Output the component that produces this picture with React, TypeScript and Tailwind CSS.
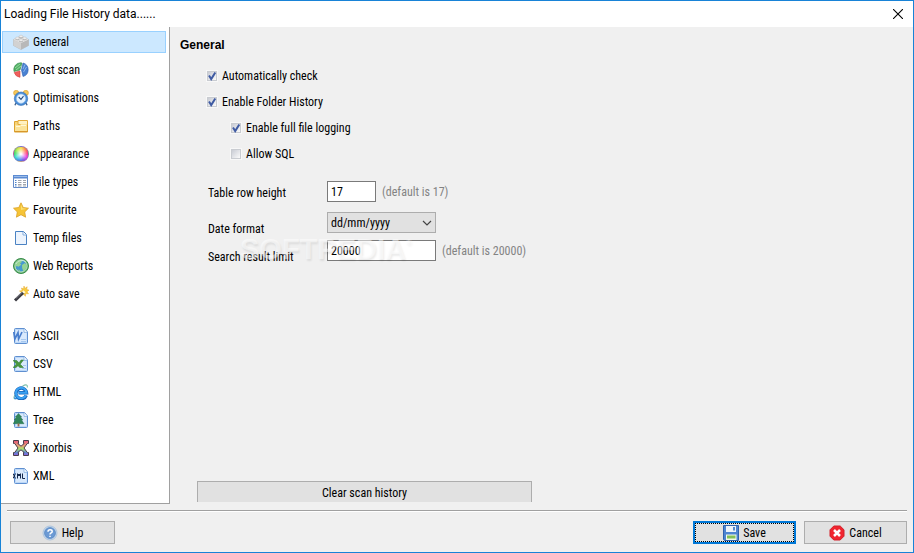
import { useState } from 'react'
import type { ReactNode } from 'react'

const Svg = ({ children }: { children: ReactNode }) => (
  <svg viewBox="0 0 16 16" className="w-4 h-4 shrink-0" aria-hidden="true">{children}</svg>
)

const BrickIcon = () => (
  <Svg>
    <path d="M0.5 5.5 8 2l7.5 3.5v6L8 15.5.5 11.5z" fill="#c8c8c8" stroke="#b4b4b4" strokeWidth=".6" />
    <path d="M.5 5.5 8 9v6.5L.5 11.5z" fill="#d2d2d2" />
    <path d="M15.5 5.5 8 9v6.5l7.5-4z" fill="#b8b8b8" />
    <path d="M.5 5.5 8 2l7.5 3.5L8 9z" fill="#e4e4e4" />
    {[[8, 2.4], [4.3, 4.2], [11.7, 4.2], [8, 6.2]].map(([x, y]) => (
      <g key={x + '-' + y}>
        <ellipse cx={x} cy={y + 0.8} rx="1.9" ry="1.3" fill="#a8a8a8" />
        <ellipse cx={x} cy={y} rx="1.9" ry="1.2" fill="#f1f1f1" stroke="#b4b4b4" strokeWidth=".4" />
      </g>
    ))}
  </Svg>
)

const PieIcon = () => (
  <Svg>
    <path d="M7 8 1 9.5A7 7 0 0 1 7.5.7L9 1z" fill="#54b267" stroke="#32884a" strokeWidth=".6" />
    <path d="M2 6 7 2M3 8l5-4" stroke="#a5dfaa" strokeWidth=".8" />
    <path d="M8.5 8 10 1a7 7 0 0 1 0 13.5z" fill="#4a82d2" stroke="#2a5db0" strokeWidth=".6" />
    <path d="m10 7 2-4.5M10.5 10l3-5" stroke="#9cc3f3" strokeWidth=".8" />
    <path d="M7 9v6.3A7 7 0 0 1 1.2 10.5z" fill="#f0605c" stroke="#d23f3f" strokeWidth=".6" />
  </Svg>
)

const ClockIcon = () => (
  <Svg>
    <path d="m3 13-1 2.3M13 13l1 2.3" stroke="#496a93" strokeWidth="1.5" />
    <circle cx="3.2" cy="2.9" r="2.6" fill="#f4c75b" stroke="#d89d2b" strokeWidth=".6" />
    <circle cx="12.8" cy="2.9" r="2.6" fill="#f4c75b" stroke="#d89d2b" strokeWidth=".6" />
    <circle cx="8" cy="8.7" r="6.7" fill="#4a8ed8" stroke="#2d69b2" strokeWidth=".6" />
    <circle cx="8" cy="8.7" r="4.7" fill="#e8f4ff" stroke="#8dbbe9" strokeWidth=".6" />
    <path d="m5.7 7 2.3 2.3 2.5-3.2" fill="none" stroke="#274c7d" strokeWidth="1.1" />
  </Svg>
)

const FolderIcon = () => (
  <Svg>
    <path d="M1.5 3.5H6L7 5h7.5v9h-13z" fill="#f8d477" stroke="#dca32f" />
    <path d="M5 2.5h9.5v4H5z" fill="#fff1c1" stroke="#e2ab3c" />
    <path d="M2 7h5l1-1h6v7.5H2z" fill="#fbe398" />
    <path d="M3 8.5h4l1-1h5" fill="none" stroke="#fff7d9" />
    <path d="M2 13.5h12.5" stroke="#d8962a" />
  </Svg>
)

const WheelIcon = () => (
  <span className="w-4 h-4 shrink-0 rounded-full border border-[#8d6ab0]/60 bg-[radial-gradient(circle,#fff_5%,transparent_65%),conic-gradient(#f6e04b,#ff8a3c,#ff3f78,#e544e8,#7457e8,#389aee,#38dfd0,#45dd5c,#b5ed43,#f6e04b)]" />
)

const TableIcon = () => (
  <Svg>
    <path d="M.5 1.5h14v12H.5z" fill="#fff" stroke="#648bc8" />
    <path d="M0 1h15v3.5H0z" fill="#5c8bd2" />
    <path d="M1 2.5h13" stroke="#9bbce9" />
    <path d="M2 6.5h1.5M2 8.5h1.5M2 10.5h1.5M2 12h1.5" stroke="#4f84c9" />
    <path d="M5 6.5h3.5M5 8.5h3.5M5 10.5h3.5M5 12h3.5M10 6.5h3M10 8.5h3M10 10.5h3M10 12h3" stroke="#969ba3" strokeWidth=".9" />
  </Svg>
)

const StarIcon = () => (
  <Svg>
    <path d="m8 .8 2.2 4.7 5.3.7-3.8 3.7.9 5.3L8 12.7l-4.6 2.5.9-5.3L.5 6.2l5.3-.7z" fill="#f6c436" stroke="#dba127" strokeWidth=".8" strokeLinejoin="round" />
    <path d="m8 2.5 1.5 3.8 3.8.5L8 8z" fill="#fbdf74" />
  </Svg>
)

const PageIcon = () => (
  <Svg>
    <path d="M2.5 1.5h8l3 3v10h-11z" fill="#edf4fd" stroke="#4a82c3" strokeLinejoin="round" />
    <path d="M10 2v3h3.5" fill="#fff" stroke="#84aede" />
  </Svg>
)

const GlobeIcon = () => (
  <Svg>
    <circle cx="8" cy="8" r="7.5" fill="#68ae70" stroke="#388e4a" />
    <circle cx="8" cy="8" r="6" fill="#4799cf" stroke="#b9e3bf" />
    <path d="M2.3 6C3 3.4 5 2 7.7 2L9 4 7 5.2l1.2 1.5-2.7 2L3.8 8 2.3 9zM9 7l3-2 2 2.5-1 3-2.5 3-1.3-3.2z" fill="#96d492" />
    <path d="M4.5 11.5 7 12l-.5 2z" fill="#81c987" />
    <path d="M3 6a6 5 0 0 1 10-2" fill="none" stroke="#e3f7f4" strokeOpacity=".6" />
  </Svg>
)

const WandIcon = () => (
  <Svg>
    <path d="m11 0 .8 2.4L14.2.8l-.6 2.7 2.4.6-2 1.6 1.5 2.1-2.7-.2-.4 2.7-1.7-2-2.3 1.1.6-2.6L6.5 5l2.7-.5L8.5 2l2 .9z" fill="#f8cc3c" stroke="#e6a729" strokeWidth=".5" />
    <path d="m2 14.5 8.5-8.3" stroke="#3b3b42" strokeWidth="3" />
    <path d="m3 12.3 6-5.8" stroke="#9b9ba3" strokeWidth=".8" />
    <path d="m10 6.7 1.5-1.5" stroke="#fff6d5" strokeWidth="3" />
  </Svg>
)

const DocBase = () => (
  <>
    <path d="M2.5.5h9l3 3.5v10.5q0 1-1 1h-11q-1 0-1-1v-13q0-1 1-1z" fill="#bcd8f8" stroke="#5f8fd0" />
    <path d="M3 2h8v3h2.5v9H3z" fill="#d9e9fc" />
    <path d="M11 .8v3.5h3.3" fill="#fff" stroke="#83ade0" strokeWidth=".8" />
  </>
)

const WordIcon = () => (
  <Svg>
    <DocBase />
    <path d="m.8 4 1 7L5 4.8l.6 6.2L9 4" fill="none" stroke="#4a7fce" strokeWidth="1.7" />
    <path d="M8 11.5h5M8 13.5h5" stroke="#a7c8ef" />
  </Svg>
)

const ExcelIcon = () => (
  <Svg>
    <DocBase />
    <path d="M0 4.5h3.7L6 7l2-3h2.5L7.2 8.2l3.3 3.3H6.7L5 9.7l-2 1.8H0L3.5 8z" fill="#49973d" stroke="#2a752c" strokeWidth=".5" />
    <path d="M9 12.5h4M10 9.5h3" stroke="#a7c8ef" />
  </Svg>
)

const BrowserIcon = () => (
  <Svg>
    <path d="M3.2 9.5c-3 3.5-3.3 6.4.8 4.7M9.5 2.2c3.5-2.2 5.6-1.6 4.6 1.3" fill="none" stroke="#7fbfa9" strokeWidth="1.1" />
    <path d="M13.2 11.3A5.3 5.3 0 1 1 13.5 8.7H5.5" fill="none" stroke="#1a66bd" strokeWidth="3.4" />
    <path d="M13 11.3A5.3 5.3 0 1 1 13.5 8.7H5.5" fill="none" stroke="#3aa2f2" strokeWidth="2" />
    <path d="M3 11.5c-2.2 3-1.6 4 1.2 2.6" fill="none" stroke="#2b86dc" strokeWidth="1.2" />
  </Svg>
)

const TreeIcon = () => (
  <Svg>
    <DocBase />
    <path d="M5.5 1.5 8.7 5H7.5l2.3 3H8.5l2.5 3.7H0L2.5 8H1.2l2.3-3H2.3z" fill="#32855a" stroke="#1d6745" strokeWidth=".4" />
    <path d="M5.5 11.5v3" stroke="#9b694c" strokeWidth="1.8" />
  </Svg>
)

const XinorbisIcon = () => (
  <Svg>
    <defs>
      <linearGradient id="xg" x1="0" y1="0" x2="0" y2="1">
        <stop offset="0" stopColor="#e55378" />
        <stop offset=".35" stopColor="#e9a178" />
        <stop offset=".55" stopColor="#a8e36b" />
        <stop offset=".8" stopColor="#628bd2" />
        <stop offset="1" stopColor="#8b5ce0" />
      </linearGradient>
    </defs>
    <path d="M.5.5h5v3h-.7L8 6.2l3.2-2.7h-.7v-3h5v3h-1.2L11 8l3.3 4.5h1.2v3h-5v-3h.7L8 9.8l-3.2 2.7h.7v3h-5v-3h1.2L5 8 1.7 3.5H.5z" fill="url(#xg)" stroke="#4b3d49" strokeWidth="1" />
  </Svg>
)

const XmlIcon = () => (
  <Svg>
    <DocBase />
    <path d="m0 5.5 2.5 5M2.5 5.5l-2.5 5M4.5 10.5v-5M7.5 10.5v-5M4.5 6.5h3M4.5 7.5h3M9.5 5.5v5H12" fill="none" stroke="#14284d" />
  </Svg>
)

const HelpIcon = () => (
  <Svg>
    <circle cx="8" cy="8" r="7" fill="#cbdced" stroke="#a2bddb" strokeWidth=".8" />
    <circle cx="8" cy="8" r="5.5" fill="#6c9ad4" stroke="#4a7cbb" strokeWidth=".6" />
    <path d="M6 6.7c0-2.8 4.2-2.5 4.2-.3C10.2 8 8 7.8 8 9.5M8 10.7v1.4" fill="none" stroke="#fff" strokeWidth="1.5" />
  </Svg>
)

const DiskIcon = () => (
  <Svg>
    <path d="M.5.5h15v15h-14l-1-1z" fill="#4d84d1" stroke="#2f62ad" />
    <path d="M3 1h10v6H3z" fill="#edf3fb" />
    <path d="M10 2h2v3.5h-2z" fill="#5888c8" />
    <path d="M3 9.5h10.5V15H3z" fill="#f3f9eb" />
    <path d="M4 10.5h8.5v3H4z" fill="#83bf58" />
  </Svg>
)

const CancelIcon = () => (
  <Svg>
    <path d="M4.8 1h6.4L15 4.8v6.4L11.2 15H4.8L1 11.2V4.8z" fill="#f0252f" stroke="#d3202a" strokeLinejoin="round" />
    <path d="m5 5 6 6M11 5l-6 6" stroke="#fff" strokeWidth="2.5" />
  </Svg>
)

const sections = [
  { name: 'General', icon: <BrickIcon /> },
  { name: 'Post scan', icon: <PieIcon /> },
  { name: 'Optimisations', icon: <ClockIcon /> },
  { name: 'Paths', icon: <FolderIcon /> },
  { name: 'Appearance', icon: <WheelIcon /> },
  { name: 'File types', icon: <TableIcon /> },
  { name: 'Favourite', icon: <StarIcon /> },
  { name: 'Temp files', icon: <PageIcon /> },
  { name: 'Web Reports', icon: <GlobeIcon /> },
  { name: 'Auto save', icon: <WandIcon /> },
]

const formats = [
  { name: 'ASCII', icon: <WordIcon /> },
  { name: 'CSV', icon: <ExcelIcon /> },
  { name: 'HTML', icon: <BrowserIcon /> },
  { name: 'Tree', icon: <TreeIcon /> },
  { name: 'Xinorbis', icon: <XinorbisIcon /> },
  { name: 'XML', icon: <XmlIcon /> },
]

const NavItem = ({ name, icon, active, onClick }: { name: string; icon: ReactNode; active: boolean; onClick: () => void }) => (
  <button
    onClick={onClick}
    className={'flex items-center gap-1 w-full h-[22px] pl-2.5 border text-left ' + (active ? 'bg-[#cce8ff] border-[#99d1ff]' : 'border-transparent')}
  >
    {icon}
    {name}
  </button>
)

const Check = ({ label, checked, indent }: { label: string; checked: boolean; indent?: boolean }) => (
  <label className={'flex items-center gap-[5px] h-[26px] w-fit ' + (indent ? 'ml-6' : '')}>
    <span className="grid shrink-0">
      <input
        type="checkbox"
        defaultChecked={checked}
        className="peer col-start-1 row-start-1 appearance-none w-2.5 h-2.5 border border-[#c9ccd1] bg-linear-to-br from-[#c9ccd4] to-[#fbfbfb] outline outline-[#f8f8f8]"
      />
      <svg viewBox="0 0 10 10" className="col-start-1 row-start-1 w-2.5 h-2.5 invisible peer-checked:visible pointer-events-none">
        <path d="M2 4.5 4.2 8 8.3 1.5" fill="none" stroke="#3f5ba3" strokeWidth="2" />
      </svg>
    </span>
    {label}
  </label>
)

const App = () => {
  const [current, setCurrent] = useState('General')

  return (
    <div className="flex flex-col min-h-screen border border-[#1883d7] bg-[#f0f0f0] text-black text-xs leading-4 font-['Roboto_Condensed','Roboto',sans-serif]">
      <header className="flex items-center justify-between h-[26px] pl-[3px] pr-[9px] bg-white">
        <h1 className="text-xs font-['Roboto',sans-serif]">Loading File History data......</h1>
        <button aria-label="Close" className="p-px">
          <svg viewBox="0 0 10 10" className="w-2.5 h-2.5"><path d="m0 0 10 10M10 0 0 10" stroke="#000" strokeWidth="1.1" /></svg>
        </button>
      </header>

      <div className="flex flex-1">
        <nav className="flex flex-col gap-1.5 w-[169px] shrink-0 pt-1 pl-px pr-[3px] bg-white border-r border-b border-[#a0a0a0]">
          {sections.map((s) => (
            <NavItem key={s.name} {...s} active={current === s.name} onClick={() => setCurrent(s.name)} />
          ))}
          <div className="h-2" />
          {formats.map((s) => (
            <NavItem key={s.name} {...s} active={current === s.name} onClick={() => setCurrent(s.name)} />
          ))}
        </nav>

        <main className="flex flex-col flex-1 pl-2.5">
          <h2 className="pt-2.5 text-xs leading-4 font-bold font-['Liberation_Sans',sans-serif]">General</h2>
          <div className="pt-2.5 pl-[27px]">
            <Check label="Automatically check" checked />
            <Check label="Enable Folder History" checked />
            <Check label="Enable full file logging" checked indent />
            <Check label="Allow SQL" checked={false} indent />
          </div>

          <div className="pl-7 pt-3.5">
            <div className="flex items-center">
              <label htmlFor="rowHeight" className="w-[119px] pt-0.5">Table row height</label>
              <input id="rowHeight" defaultValue="17" className="w-[49px] h-[21px] px-[3px] border border-[#7a7a7a] bg-white" />
              <span className="pl-1.5 text-[#838383]">(default is 17)</span>
            </div>
            <div className="flex items-start pt-2.5">
              <label htmlFor="dateFormat" className="w-[119px] pt-[9px]">Date format</label>
              <div className="grid items-center">
                <select id="dateFormat" className="col-start-1 row-start-1 appearance-none w-[109px] h-[21px] px-[3px] border border-[#adadad] bg-[#e1e1e1]">
                  <option>dd/mm/yyyy</option>
                  <option>mm/dd/yyyy</option>
                </select>
                <svg viewBox="0 0 10 6" className="col-start-1 row-start-1 justify-self-end mr-1 w-2.5 h-1.5 pointer-events-none">
                  <path d="m1 1 4 4 4-4" fill="none" stroke="#444" strokeWidth="1.2" />
                </svg>
              </div>
            </div>
            <div className="relative flex items-start pt-[3px]">
              <label htmlFor="limit" className="w-[119px] pt-[9px]">Search result limit</label>
              <input id="limit" defaultValue="20000" className="w-[109px] h-[21px] px-[3px] border border-[#7a7a7a] bg-white" />
              <span className="pl-1.5 pt-[3px] text-[#838383]">(default is 20000)</span>
              <div className="absolute left-8 top-0 flex pointer-events-none text-white/50 font-bold font-['Liberation_Sans',sans-serif] [text-shadow:1px_2px_2px_rgba(0,0,0,0.08)]">
                <span className="text-[29px] leading-6">SOFTPEDIA</span>
                <span className="text-[8px] leading-3">®</span>
              </div>
            </div>
          </div>

          <button className="mt-auto mb-0.5 ml-[17px] w-[335px] h-[21px] pt-0.5 border border-b-0 border-[#adadad] bg-[#e1e1e1]">Clear scan history</button>
        </main>
      </div>

      <footer className="mt-1.5 mx-1.5">
        <div className="h-0.5 border-t border-[#a0a0a0] bg-white" />
        <div className="flex gap-2 pl-[3px] pt-[9px] pb-2">
          <button className="flex items-center justify-center gap-1 w-[105px] h-[23px] mr-auto border border-[#adadad] bg-[#e1e1e1]"><HelpIcon />Help</button>
          <button className="w-[103px] h-[23px] border-2 border-[#0078d7] bg-[#e1e1e1]">
            <span className="flex items-center justify-center gap-1 h-full border border-dotted border-black"><DiskIcon />Save</span>
          </button>
          <button className="flex items-center justify-center gap-1 w-[103px] h-[23px] border border-[#adadad] bg-[#e1e1e1]"><CancelIcon />Cancel</button>
        </div>
      </footer>
    </div>
  )
}

export default App
